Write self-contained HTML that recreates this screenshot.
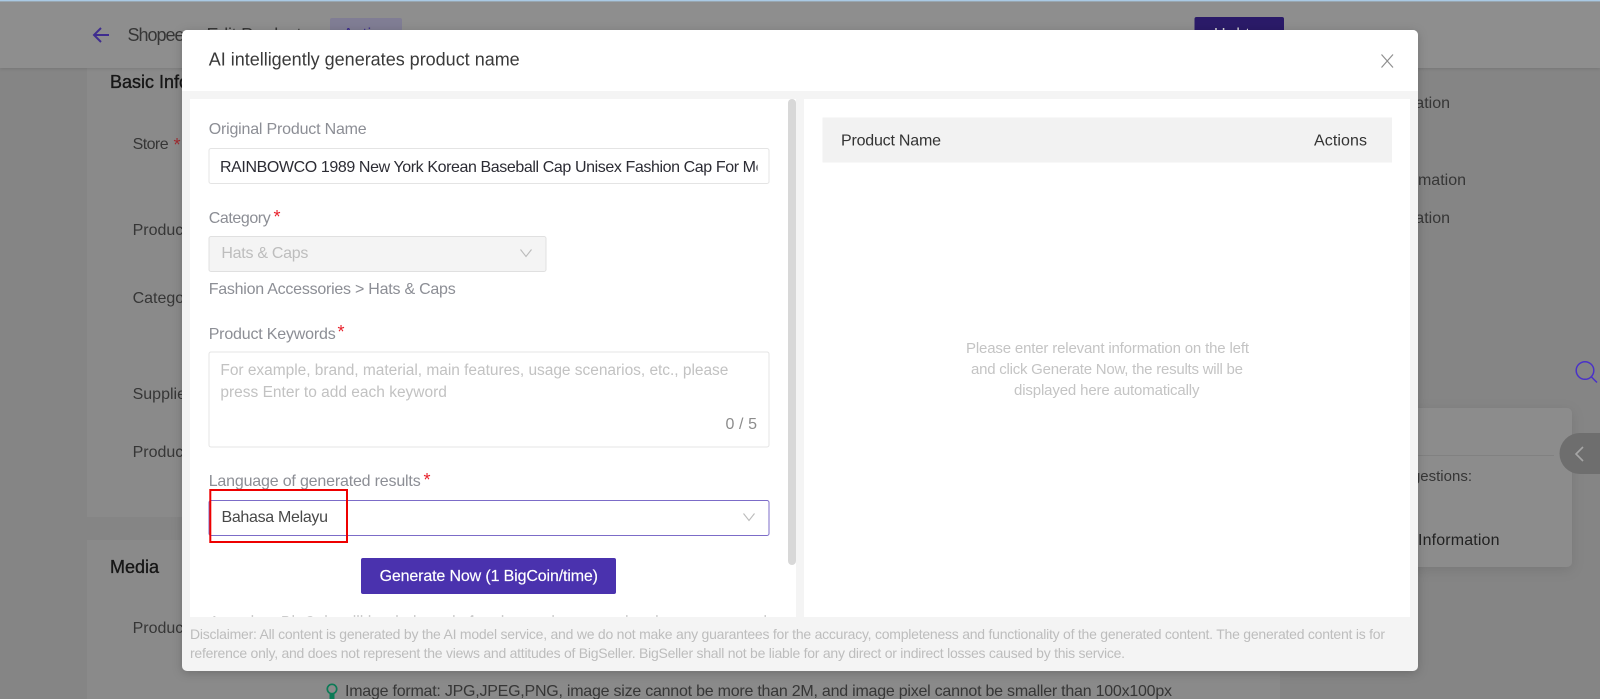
<!DOCTYPE html>
<html lang="en">
<head>
<meta charset="utf-8">
<title>AI intelligently generates product name</title>
<style>
html,body{margin:0;padding:0;width:1600px;height:699px;overflow:hidden;background:#858585}
svg{display:block}
text{font-family:"Liberation Sans",Arial,sans-serif;font-size:16px;white-space:pre}
.bg{fill:#363636}
.lb{fill:#8c8e95}
.ph{fill:#c2c2c2;font-size:15.5px}
.st{fill:#e8202a;font-size:18px}
</style>
</head>
<body>
<svg xmlns="http://www.w3.org/2000/svg" width="1600" height="699" viewBox="0 0 1600 699">
<defs>
<filter id="ms" x="-5%" y="-5%" width="110%" height="110%"><feDropShadow dx="0" dy="2" stdDeviation="5" flood-color="#000" flood-opacity=".2"/></filter>
<filter id="cs" x="-10%" y="-10%" width="120%" height="125%"><feDropShadow dx="0" dy="3" stdDeviation="6" flood-color="#000" flood-opacity=".1"/></filter>
<filter id="hs" x="-1%" y="-5%" width="102%" height="115%"><feDropShadow dx="0" dy="1" stdDeviation="1.5" flood-color="#000" flood-opacity=".12"/></filter>
<clipPath id="c1"><rect x="220" y="150" width="537.500" height="32"/></clipPath>
<clipPath id="c2"><rect x="190" y="600" width="598" height="16.5"/></clipPath>
</defs>

<!-- page background -->
<rect width="1600" height="699" fill="#858585"/>
<rect x="87" y="68" width="1193" height="449" fill="#8a8a8a"/>
<rect x="87" y="540" width="1193" height="159" fill="#8a8a8a"/>

<!-- page header -->
<rect x="0" y="1" width="1600" height="67" fill="#8e8e8e" filter="url(#hs)"/>
<rect x="0" y="0" width="1600" height="1.4" fill="#a9c9e4"/>
<path d="M109 35H94M101 28l-7 7 7 7" fill="none" stroke="#3f2d8f" stroke-width="2"/>
<text class="bg" x="127.5" y="41" style="font-size:18px" textLength="57">Shopee</text>
<text class="bg" x="206.5" y="41" style="font-size:18px" textLength="95">Edit Product</text>
<rect x="330" y="18" width="72" height="26" fill="#807d94" rx="2"/>
<text x="343" y="39" fill="#3a2a8c" textLength="46">Active</text>
<rect x="1194.5" y="17" width="89.500" height="36" fill="#2a1a68" rx="2"/>
<text x="1214" y="39" fill="#d8d8d8" textLength="43">Update</text>

<!-- page content behind modal -->
<text x="110" y="88" fill="#161616" stroke="#161616" stroke-width=".35" style="font-size:18px">Basic Information</text>
<text class="bg" x="132.600" y="149" textLength="36">Store</text>
<text x="173.500" y="151" fill="#a02a30" style="font-size:18px">*</text>
<text class="bg" x="132.600" y="235">Product Name</text>
<text class="bg" x="132.600" y="303">Category</text>
<text class="bg" x="132.600" y="399">Supplier</text>
<text class="bg" x="132.600" y="457">Product Tags</text>
<text x="110" y="573" fill="#161616" stroke="#161616" stroke-width=".35" style="font-size:18px" textLength="49">Media</text>
<text class="bg" x="132.600" y="633">Product Images</text>
<circle cx="332" cy="689" r="4.700" fill="none" stroke="#0c7a56" stroke-width="1.700"/>
<path d="M332 694V699" stroke="#0c7a56" stroke-width="5"/>
<text class="bg" x="345" y="696" textLength="827">Image format: JPG,JPEG,PNG, image size cannot be more than 2M, and image pixel cannot be smaller than 100x100px</text>

<!-- right nav -->
<text class="bg" x="1450" y="108" text-anchor="end">Basic Information</text>
<text class="bg" x="1466" y="185" text-anchor="end">Shipping Information</text>
<text class="bg" x="1450" y="223" text-anchor="end">Other Information</text>
<circle cx="1585" cy="370.500" r="8.800" fill="none" stroke="#4a32c8" stroke-width="1.500"/>
<path d="M1591.500 377l5.500 5.500" stroke="#4a32c8" stroke-width="1.500"/>
<rect x="1380" y="408" width="192" height="159" rx="5" fill="#8c8c8c" filter="url(#cs)"/>
<rect x="1380" y="455" width="174" height="1" fill="#818181"/>
<text class="bg" x="1472" y="481" text-anchor="end" style="font-size:15px">Optimization Suggestions:</text>
<text x="1418" y="545" fill="#222" textLength="81.500">Information</text>
<path d="M1600 433h-20a20.500 20.500 0 0 0 0 41h20z" fill="#6e6e6e"/>
<path d="M1583 447l-7 7 7 7" fill="none" stroke="#a6a6a6" stroke-width="1.600"/>

<!-- modal -->
<rect x="182" y="30" width="1236" height="641" rx="5" fill="#f4f4f4" filter="url(#ms)"/>
<path d="M182 91V35a5 5 0 0 1 5-5h1226a5 5 0 0 1 5 5v56z" fill="#fff"/>
<text x="208.700" y="65.500" fill="#3a3a3a" style="font-size:18px" textLength="311">AI intelligently generates product name</text>
<path d="M1381.500 54.500l11.500 13M1393 54.500l-11.500 13" fill="none" stroke="#8f8f8f" stroke-width="1.200"/>

<!-- left panel -->
<rect x="190" y="99" width="606" height="518" fill="#fff"/>
<rect x="788" y="99" width="8" height="466" rx="4" fill="#d8d8d8"/>

<text class="lb" x="208.700" y="134" textLength="158">Original Product Name</text>
<rect x="209" y="148.500" width="560" height="35" rx="2" fill="#fff" stroke="#e4e4e4"/>
<g clip-path="url(#c1)"><text x="220" y="172" fill="#2c2c34" textLength="553">RAINBOWCO 1989 New York Korean Baseball Cap Unisex Fashion Cap For Men</text></g>

<text class="lb" x="208.700" y="223" textLength="62">Category</text>
<text class="st" x="273.500" y="223">*</text>
<rect x="209" y="236.500" width="337" height="35" rx="2" fill="#f4f4f4" stroke="#e0e0e0"/>
<text x="221.400" y="258" fill="#bdbdbd" textLength="87">Hats &amp; Caps</text>
<path d="M520.500 249.500l5.500 7 5.500-7" fill="none" stroke="#bbb" stroke-width="1.100"/>
<text class="lb" x="208.700" y="294" textLength="247">Fashion Accessories &gt; Hats &amp; Caps</text>

<text class="lb" x="208.700" y="339" textLength="127">Product Keywords</text>
<text class="st" x="337.500" y="338">*</text>
<rect x="209" y="352" width="560" height="95" rx="2" fill="#fff" stroke="#e4e4e4"/>
<text class="ph" x="220.400" y="375" textLength="508">For example, brand, material, main features, usage scenarios, etc., please</text>
<text class="ph" x="220.400" y="397" textLength="226.500">press Enter to add each keyword</text>
<text x="725.500" y="429" fill="#8c8c8c" textLength="31.500">0 / 5</text>

<text class="lb" x="208.700" y="486" textLength="212">Language of generated results</text>
<text class="st" x="423.500" y="486">*</text>
<rect x="209" y="500.500" width="560" height="35" rx="2" fill="#fff" stroke="#7c6cc8"/>
<text x="221.500" y="522" fill="#484848" textLength="106.500">Bahasa Melayu</text>
<path d="M743.500 513.500l5.500 7 5.500-7" fill="none" stroke="#bbb" stroke-width="1.100"/>
<rect x="210.300" y="490" width="136.700" height="52" fill="none" stroke="#ee0000" stroke-width="2"/>

<rect x="361" y="558" width="255" height="36" rx="2" fill="#4a32ae"/>
<text x="379.600" y="581" fill="#fff" stroke="#fff" stroke-width=".15" textLength="218.400">Generate Now (1 BigCoin/time)</text>

<g clip-path="url(#c2)"><text x="209" y="627" fill="#9a9a9a" textLength="558">Attention: BigCoin will be deducted after the product name has been generated</text></g>

<!-- right panel -->
<rect x="804" y="99" width="606" height="518" fill="#fff"/>
<rect x="822.500" y="117.500" width="569.500" height="45" fill="#f2f2f2"/>
<text x="841" y="145.500" fill="#333" textLength="100">Product Name</text>
<text x="1314" y="145.500" fill="#333" textLength="53">Actions</text>
<text x="966" y="353" fill="#c4c4c4" style="font-size:15px" textLength="283">Please enter relevant information on the left</text>
<text x="971" y="374" fill="#c4c4c4" style="font-size:15px" textLength="272">and click Generate Now, the results will be</text>
<text x="1014" y="395" fill="#c4c4c4" style="font-size:15px" textLength="185.500">displayed here automatically</text>

<!-- disclaimer -->
<text x="190" y="639" fill="#bdbdbd" style="font-size:14px" textLength="1195">Disclaimer: All content is generated by the AI model service, and we do not make any guarantees for the accuracy, completeness and functionality of the generated content. The generated content is for</text>
<text x="190" y="658" fill="#bdbdbd" style="font-size:14px" textLength="935">reference only, and does not represent the views and attitudes of BigSeller. BigSeller shall not be liable for any direct or indirect losses caused by this service.</text>
</svg>
</body>
</html>
